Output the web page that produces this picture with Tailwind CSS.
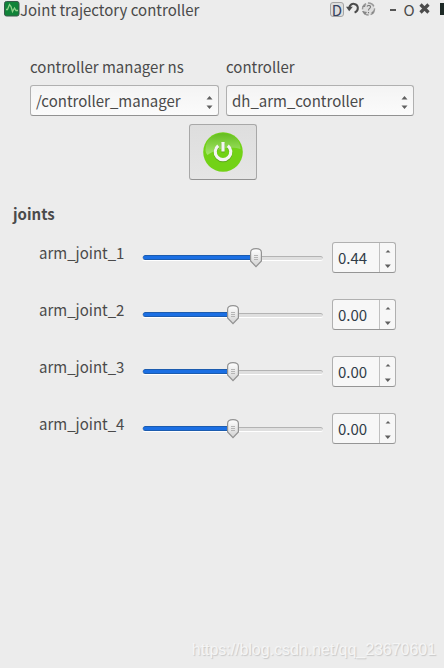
<!DOCTYPE html>
<html lang="en">
<head>
<meta charset="utf-8">
<title>Joint trajectory controller</title>
<script src="https://cdn.jsdelivr.net/npm/@tailwindcss/browser@4"></script>
</head>
<body class="w-[444px] h-[668px] overflow-hidden bg-[#ececec] text-[#4a4a4a] font-['Noto_Sans_CJK_SC','Noto_Sans',sans-serif] text-[15px] leading-5 flex flex-col">
<header class="h-5 flex items-start pl-1 shrink-0">
  <svg class="w-4 h-4 mt-px shrink-0" viewBox="0 0 16 16"><rect x=".5" y=".5" width="14.5" height="14.5" rx="2" fill="#108339" stroke="#39594b"/><path d="M2 8.5h1.5l2-5 1.5 2 1.5 5 2-3.5 1.5 2.5h2" fill="none" stroke="#8ed18a" stroke-width="1.3"/></svg>
  <h1 class="whitespace-nowrap">Joint trajectory controller</h1>
  <div class="ml-auto flex shrink-0 w-[114px] h-5">
    <span class="w-[14px] h-[15px] mt-[2px] border border-[#a5a5a5] rounded-[3px] bg-[#dedede] text-[15px] leading-[14px] text-center shrink-0 text-[#34435f]">D</span>
    <svg class="w-[14px] h-[14px] mt-[2px] ml-[2px] shrink-0" viewBox="0 0 14 14"><path d="M3.2 6.2C3.6 2.8 6 1.6 8.2 1.9c4.6.7 5 6.7.4 8.7" fill="none" stroke="#4c4c4c" stroke-width="2"/><path d="M0 4.8h6.8L3.2 9.3z" fill="#4c4c4c"/></svg>
    <svg class="w-[15px] h-[15px] mt-[2px] ml-[1px] shrink-0" viewBox="0 0 15 15"><circle cx="7.5" cy="7" r="6" fill="#dedede" stroke="#999" stroke-width="1.4" stroke-dasharray="7 2"/><path d="M1 5l4-3-1 3zM1 9l5 1-2 3zM10 11l3-3-1 4z" fill="#858585"/><path d="M6 4.5c1-1.8 4-1 3.4.8C9 6.6 7.5 6.5 7.5 8.6M7.5 10v1.2" fill="none" stroke="#777" stroke-width="1.1"/></svg>
    <span class="w-[6px] h-[2px] mt-[9px] ml-[14px] bg-[#555] shrink-0"></span>
    <span class="w-[12px] ml-[7px] text-[15px] text-center shrink-0">O</span>
    <svg class="w-[11px] h-[11px] mt-[3px] ml-[4px] shrink-0" viewBox="0 0 11 11"><path d="M1.5 1.5l8 8M9.5 1.5l-8 8" stroke="#4b4b4b" stroke-width="3.2"/></svg>
    <span class="w-1 h-3 mt-[3px] ml-auto bg-[#1d2926] shrink-0"></span>
  </div>
</header>
<main class="flex flex-col pt-[37px]">
  <section class="pl-[30px] pr-[29px] flex gap-[7px]">
    <div class="w-[189px]"><label class="block h-7 whitespace-nowrap">controller manager ns</label>
      <div class="h-[31px] border border-[#b0b0b0] border-b-[#929292] rounded-[3px] bg-linear-to-b from-[#f4f4f4] to-[#fbfbfb] flex items-center justify-between px-[5px]"><span>/controller_manager</span><svg class="w-[7px] h-[13px] mt-1" viewBox="0 0 7 13"><path d="M.5 3.5L3.5 0l3 3.5zM.5 9.5h6l-3 3.5z" fill="#606060"/></svg></div></div>
    <div class="w-[188px]"><label class="block h-7 whitespace-nowrap">controller</label>
      <div class="h-[31px] border border-[#b0b0b0] border-b-[#929292] rounded-[3px] bg-linear-to-b from-[#f4f4f4] to-[#fbfbfb] flex items-center justify-between px-[5px]"><span>dh_arm_controller</span><svg class="w-[7px] h-[13px] mt-1" viewBox="0 0 7 13"><path d="M.5 3.5L3.5 0l3 3.5zM.5 9.5h6l-3 3.5z" fill="#606060"/></svg></div></div>
  </section>
  <button class="w-[68px] h-14 mt-2 ml-[189px] border border-[#a8a8a8] border-b-[#929292] rounded-[3px] bg-linear-to-b from-[#dedede] to-[#e5e5e5] flex items-center justify-center" aria-label="Power">
    <svg class="w-10 h-10" viewBox="0 0 40 40"><defs><linearGradient id="shine" x2="0" y2="1"><stop stop-color="#65bd20"/><stop offset="1" stop-color="#a5e66a"/></linearGradient></defs><circle cx="20" cy="20" r="19.8" fill="#72d216"/><path d="M2.5 18C2.5 7 11 1.3 20 1.3S37.5 7 37.5 17c-8-3-25-1-33 6-1-1-2-3-2-5z" fill="url(#shine)"/><path d="M15.2 13.7A7.8 7.8 0 1 0 24.8 13.7M20 10v9.5" fill="none" stroke="#5ba51a" stroke-width="3.4" transform="translate(0 1)"/><path d="M15.2 13.7A7.8 7.8 0 1 0 24.8 13.7M20 10v9.5" fill="none" stroke="#f4f4f4" stroke-width="3.2"/></svg>
  </button>
  <h2 class="mt-[24px] ml-[13px] h-[22px] font-bold">joints</h2>
  <section id="joints" class="pt-[16px]"></section>
</main>
<footer class="mt-auto h-[29px] pr-[8px] text-right font-['Liberation_Sans',sans-serif] text-[16px] leading-[21px] tracking-[-0.04px] text-[#f5f5f5] [text-shadow:1px_1px_1px_#c8c8c8]">https://blog.csdn.net/qq_23670601</footer>
<template id="row">
  <div class="flex h-[57px] items-start pl-[39px]">
    <span class="name w-[103px] pt-px"></span>
    <div class="relative w-[181px] h-[22px] mt-[5px] flex items-center">
      <div class="w-full h-[5px] rounded-[3px] bg-[#dfdfdf] border-t border-[#b3b3b3] border-b border-b-white"></div>
      <div class="fill absolute left-[1px] top-[8px] h-[5px] rounded-l-[3px] bg-[#1b6fe3] border-y border-[#1c5caf]"></div>
      <svg class="thumb absolute top-0 w-[12px] h-[21px]" viewBox="0 0 12 21"><path d="M.6 5.5C.6 2.5 2.5 1.6 6 1.6s5.4.9 5.4 3.9V14L6 19.7.6 14z" fill="url(#knob)" stroke="#929292" stroke-width="1.2"/><path d="M4 8.5h4M4 10.5h4M4 12.5h4" stroke="#b5b5b5"/></svg>
    </div>
    <div class="w-16 h-[31px] ml-[9px] border border-[#b0b0b0] border-b-[#959595] rounded-[3px] bg-[#f7f7f7] flex">
      <span class="value w-[47px] border-r border-[#c0c0c0] pl-[5px] leading-[29px] text-[#303c48]"></span>
      <svg class="w-[15px] h-[29px]" viewBox="0 0 15 29"><path d="M5.5 9.5L8 7l2.5 2.5zM4.8 21.5h6L7.8 25z" fill="#606060"/></svg>
    </div>
  </div>
</template>
<svg class="absolute w-0 h-0"><defs><linearGradient id="knob" x2="0" y2="1"><stop stop-color="#fff"/><stop offset="1" stop-color="#d2d2d2"/></linearGradient></defs></svg>
<script>
const rows = [["arm_joint_1","0.44",114],["arm_joint_2","0.00",91],["arm_joint_3","0.00",91],["arm_joint_4","0.00",91]];
for (const [name, value, pos] of rows) {
  const r = document.getElementById("row").content.cloneNode(true);
  r.querySelector(".name").textContent = name;
  r.querySelector(".value").textContent = value;
  r.querySelector(".fill").style.width = pos - 5 + "px";
  r.querySelector(".thumb").style.left = pos - 6 + "px";
  document.getElementById("joints").append(r);
}
</script>
</body>
</html>
